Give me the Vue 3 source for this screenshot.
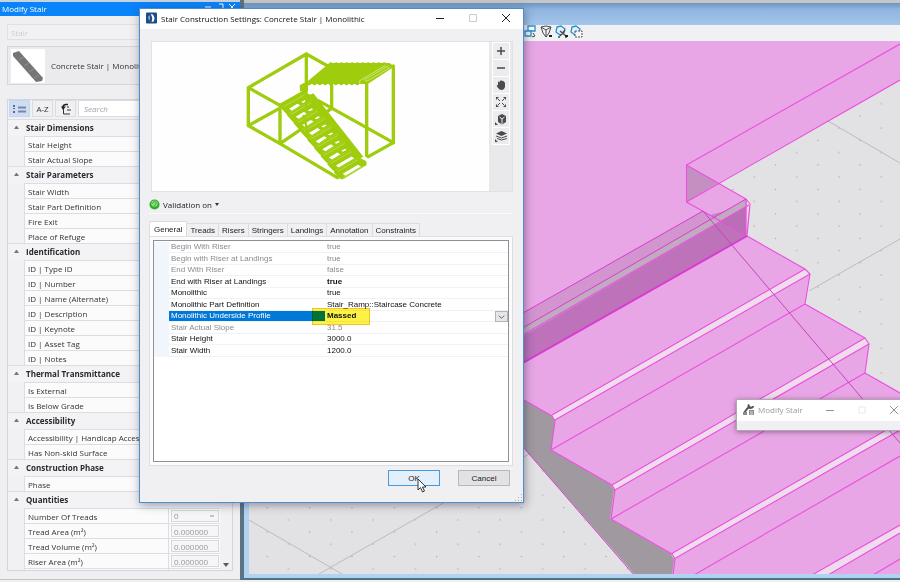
<script setup>
import { ref } from 'vue'

const groups = [
  { title: 'Stair Dimensions', rows: ['Stair Height', 'Stair Actual Slope'] },
  { title: 'Stair Parameters', rows: ['Stair Width', 'Stair Part Definition', 'Fire Exit', 'Place of Refuge'] },
  { title: 'Identification', rows: ['ID | Type ID', 'ID | Number', 'ID | Name (Alternate)', 'ID | Description', 'ID | Keynote', 'ID | Asset Tag', 'ID | Notes'] },
  { title: 'Thermal Transmittance', rows: ['Is External', 'Is Below Grade'] },
  { title: 'Accessibility', rows: ['Accessibility | Handicap Accessible', 'Has Non-skid Surface'] },
  { title: 'Construction Phase', rows: ['Phase'] },
]
const quantities = ['Tread Area (m²)', 'Tread Volume (m²)', 'Riser Area (m²)']

const tabs = ['General', 'Treads', 'Risers', 'Stringers', 'Landings', 'Annotation', 'Constraints']
const activeTab = ref('General')

const params = [
  { name: 'Begin With Riser', value: 'true', off: true },
  { name: 'Begin with Riser at Landings', value: 'true', off: true },
  { name: 'End With Riser', value: 'false', off: true },
  { name: 'End with Riser at Landings', value: 'true', bold: true },
  { name: 'Monolithic', value: 'true' },
  { name: 'Monolithic Part Definition', value: 'Stair_Ramp::Staircase Concrete' },
  { name: 'Monolithic Underside Profile', value: 'Massed', selected: true },
  { name: 'Stair Actual Slope', value: '31.5', off: true },
  { name: 'Stair Height', value: '3000.0' },
  { name: 'Stair Width', value: '1200.0' },
]

// Each tread is a rounded parallelogram; x/y is the centre of its left edge.
const treads = Array.from({ length: 9 }, (_, i) => ({
  x: 151 + i * 20,
  y: 208 + i * 24.4,
  split: i < 7,
}))

const nosings = [
  '552,415 805,269 810,274 555,420',
  '612,485 865,338 869,344 615,490',
  '671,554 900,422 900,430 674,559',
  '812,575 900,525 900,533 828,575',
]
</script>

<template>
  <div class="app">
    <aside class="panel">
      <header class="panel-title">
        <h2>Modify Stair</h2>
        <svg class="panel-ctl" viewBox="0 0 34 12" aria-hidden="true">
          <path d="M2 5h6M16 2h4v4M16 8h2M26 2l6 6M32 2l-6 6" />
        </svg>
      </header>
      <div class="panel-body">
        <input class="name-box" type="text" placeholder="Stair" aria-label="Element name" disabled />
        <button class="type-card" type="button">
          <svg viewBox="0 0 34 34" aria-hidden="true">
            <rect width="34" height="34" fill="#fff" />
            <path d="M2 4l6-2 24 27-1 3-6 1L2 7z" fill="#757575" />
            <path d="M8 11l5-3M13 17l5-3M18 23l5-3M23 29l5-3" stroke="#8e8e8e" fill="none" />
          </svg>
          <span>Concrete Stair | Monolithic</span>
        </button>
        <div class="grid-box">
          <div class="grid-bar">
            <button class="bar-btn on" type="button" aria-label="Categories">
              <svg viewBox="0 0 16 12" aria-hidden="true">
                <path d="M1 2h2v2H1zM1 8h2v2H1zM1 5h2v1H1z" fill="#5a6a88" />
                <path d="M6 4.500h8M6 8.500h8" stroke="#7688a8" stroke-width="2" fill="none" />
              </svg>
            </button>
            <button class="bar-btn" type="button">A-Z</button>
            <button class="bar-btn" type="button" aria-label="Sort">
              <svg viewBox="0 0 16 12" aria-hidden="true">
                <path d="M10 1.500H7.500Q5 2 5 4" stroke="#222" stroke-width="1.500" fill="none" />
                <path d="M3 3.500h5L5 7z" fill="#222" />
                <path d="M5.500 6v5h6.500M9 7h4M9 4h2" stroke="#333" fill="none" />
              </svg>
            </button>
            <input class="search" type="search" placeholder="Search" aria-label="Search" />
          </div>
          <div class="groups">
            <section v-for="g in groups" :key="g.title" class="group">
              <h3><i class="caret"></i>{{ g.title }}</h3>
              <div v-for="r in g.rows" :key="r" class="prop"><span>{{ r }}</span></div>
            </section>
            <section class="group">
              <h3><i class="caret"></i>Quantities</h3>
              <div class="prop">
                <label for="treadCount">Number Of Treads</label>
                <div class="field">
                  <select id="treadCount" disabled><option>0</option></select>
                </div>
              </div>
              <div v-for="(q, i) in quantities" :key="q" class="prop">
                <label :for="'q' + i">{{ q }}</label>
                <div class="field"><input :id="'q' + i" type="text" value="0.000000" disabled /></div>
              </div>
              <div class="prop"></div>
            </section>
            <i class="scroll-down"></i>
          </div>
        </div>
      </div>
    </aside>

    <main class="view">
      <div class="view-caption"></div>
      <div class="view-frame">
        <div class="view-tools">
          <svg viewBox="0 0 60 14" aria-hidden="true">
            <g fill="none" stroke="#2b8fd0" stroke-width="1.3">
              <path d="M4 1h7v5H4z" fill="#fff" /><path d="M1 6h6v5H1z" fill="#e8f4fc" />
              <path d="M33 2l4-1 4 3-1 4-4 2-4-3z" fill="#e2f1fb" />
              <path d="M48 2l4-1 4 3-1 4-4 2-4-3z" fill="#e2f1fb" />
            </g>
            <g fill="none" stroke="#4c4c4c">
              <path d="M9 8l2 3-3 1M17 2l5-1 5 1-5 3zM17 2l2 6 3 4 3-4 2-6M22 5v7" />
              <path d="M36 11l5-6M36 6l6 5M34 12h2M41 12h2" stroke-width="1.3" />
              <path d="M51 6h7v6h-7z" fill="#f6f6f6" stroke-dasharray="2 1" />
            </g>
            <path d="M25 10h3v2h-3zM41 10h3v2h-3z" fill="#222" />
          </svg>
        </div>
        <svg class="scene" viewBox="249 41 651 534" preserveAspectRatio="xMinYMin slice" role="img" aria-label="Stair model">
          <defs>
            <pattern id="dots" x="309" y="507" width="42.35" height="24.48" patternUnits="userSpaceOnUse">
              <rect x="0" y="0" width="1.2" height="1.2" fill="#a8a4a8" />
              <rect x="21.2" y="12.2" width="1.2" height="1.2" fill="#a8a4a8" />
            </pattern>
          </defs>
          <rect x="249" y="41" width="651" height="534" fill="#e2e1e3" />
          <rect x="249" y="41" width="651" height="534" fill="url(#dots)" />
          <g stroke="#c0b9bd" fill="none">
            <path d="M319 574L536 450M249 520l93 54M809 291l91-52M828 121l72 42" />
          </g>
          <path d="M500 386l24 14 28 16 3 5-4 29 61 35 3 5-4 29 61 35 3 5-2 16h-38L523 447l-23-28z" fill="#a099a0" />
          <path d="M500 41h400v39L718 183l28 16 4 5-3 32 58 33 5 5-5 30 60 34 4 6-4 29 35 20v182H672l2-16-3-5-61-35 4-29-3-5-60-35 4-29-3-5-29-16-23-14z" fill="#e9a6e6" />
          <path d="M500 326l203-115 13 7-216 124z" fill="#d395d0" />
          <path d="M500 349l246-142v29L500 376z" fill="#bd72ba" />
          <path d="M710 215l36 21v-36l-18 10z" fill="#b56cb2" opacity=".6" />
          <path d="M500 341l246-142 2 6-248 144z" fill="#c1abc0" />
          <path d="M747 200l3 4-1 5-3 25z" fill="#f3d5f0" />
          <path d="M686.5 165l31.5 18-31.5 19z" fill="#c48fc1" />
          <polygon v-for="n in nosings" :key="n" :points="n" fill="#efdded" />
          <g fill="none" stroke="#eb4fe0" stroke-width="1.1" stroke-linejoin="round">
            <path d="M900 80L686.5 202V165L900 44M686.5 165L746 199l4 5-3 32 58 33 5 5-5 30 60 34 4 6-4 29 35 20" />
            <path d="M500 386l24 14 28 16 3 5-4 29 61 35 3 5-4 29 61 35 3 5-2 16" />
            <path d="M686.5 202L747 236M746 199v37M500 348l249-143" />
            <path d="M552 415L805 269M555 420L810 274M551 450L805 304" />
            <path d="M612 485L865 338M615 490L869 344M611 519L865 373" />
            <path d="M671 554L900 422M674 559L900 430M694 575L900 456" />
            <path d="M812 575l88-50M828 575l72-42M873 575l27-16" />
          </g>
          <g fill="none" stroke="#d93bd0">
            <path d="M500 326L703 211M500 341L746 199" />
            <path d="M500 376L747 236" stroke-width="2" />
            <path d="M523 447L634 575" />
            <path d="M703 211L900 443" stroke="#c046bd" />
          </g>
        </svg>
      </div>
    </main>

    <section class="dialog" role="dialog" aria-labelledby="dlgTitle">
      <header class="dlg-title">
        <svg class="logo" viewBox="0 0 12 12" aria-hidden="true">
          <rect width="12" height="12" rx="1" fill="#1b4f86" />
          <path d="M4 3Q1 5 4 9z" fill="#a9cbe8" />
          <path d="M5 2h2q4 4 1 8H6q2-4-1-8z" fill="#fff" />
        </svg>
        <h1 id="dlgTitle">Stair Construction Settings: Concrete Stair | Monolithic</h1>
        <button type="button" aria-label="Minimize"><svg viewBox="0 0 10 10"><path d="M1 5.500h8" /></svg></button>
        <button type="button" aria-label="Maximize" disabled><svg viewBox="0 0 10 10"><path d="M1.500 1.500h7v7h-7z" /></svg></button>
        <button type="button" aria-label="Close"><svg viewBox="0 0 10 10"><path d="M1 1l8 8M9 1l-8 8" /></svg></button>
      </header>

      <div class="dlg-body">
        <div class="preview">
          <div class="preview-pic">
            <svg viewBox="30 30 456 399" role="img" aria-label="Stair preview">
              <g fill="none" stroke="#9fcc0c" stroke-width="10" stroke-linejoin="round" stroke-linecap="round">
                <path d="M275 76L214 42 40 143v114l95 54 172 102M40 143l95 53v115M214 42v110M40 257l88-49M135 196l72-40M135 311l155-106v-75M250 182l225 126" />
                <path d="M395 130v217M475 78v230l-75 42" />
              </g>
              <path d="M284 71h178l13 8-78 51H214z" fill="#9fcc0c" stroke="#9fcc0c" stroke-width="4" stroke-linejoin="round" />
              <path d="M287 71h170M222 131h150" stroke="#9fcc0c" stroke-width="9" stroke-linecap="round" stroke-dasharray="1 15" />
              <path d="M375 131l-2-8 78-47M389 119l68-40 6 5-68 40z" fill="none" stroke="#e4f3ae" stroke-width="2" />
              <path d="M194 136l14-8 12 8-5 18h-20z" fill="#9fcc0c" />
              <path d="M140 205L300 395 385 350 235 160z" fill="#9fcc0c" />
              <g v-for="t in treads" :key="t.x" :transform="`translate(${t.x} ${t.y})`">
                <path d="M-10-7L59-47 79-37 80-30 11 11 5 9z" fill="#9fcc0c" stroke="#9fcc0c" stroke-width="8" stroke-linejoin="round" />
                <path d="M-3-9L58-44" stroke="#d2e98a" stroke-width="1.500" />
                <path v-if="t.split" d="M11-2L36-17l9 5L20 4zM48-22l11-6 5 3-11 6z" fill="#fff" />
                <path v-else d="M12-2L58-29l9 5L20 4z" fill="#fff" />
                <path d="M10 13L78-26" stroke="#d2e98a" stroke-width="1.500" />
              </g>
              <path d="M214 150v70M205 225l12 45" stroke="#9fcc0c" stroke-width="7" fill="none" />
            </svg>
          </div>
          <div class="preview-tools">
            <button type="button" aria-label="Zoom in"><svg viewBox="0 0 12 12"><path d="M6 2v8M2 6h8" /></svg></button>
            <button type="button" aria-label="Zoom out"><svg viewBox="0 0 12 12"><path d="M2 6h8" /></svg></button>
            <button type="button" aria-label="Pan"><svg viewBox="0 0 12 12"><path class="fill" d="M3 6V3l1-.5.8 1V1.800L6 1.500l1 .2 1.200.3 1 .8L10 4v4q-1 3-3.500 3Q4.500 11 3 9L1.500 6.500z" /></svg></button>
            <button type="button" aria-label="Fit"><svg viewBox="0 0 12 12"><path class="thin" d="M5 5L3 3M7 5l2-2M5 7l-2 2M7 7l2 2" /><path class="fill" d="M1 1h3L1 4zM11 1v3L8 1zM1 11V8l3 3zM11 11H8l3-3z" /></svg></button>
            <button type="button" aria-label="View angle"><svg viewBox="0 0 12 12"><path class="fill" d="M7 1l4 2v6l-4 2.500L3 9V3z" /><path d="M7 11V6L4.500 4M7 6l2.500-2" class="light" /><path class="fill" d="M0 9l3 3H0z" /></svg></button>
            <button type="button" aria-label="Display mode"><svg viewBox="0 0 12 12"><path class="fill" d="M6.500 1L12 3.500 6.500 6 1 3.500zM0 9l3 3H0z" /><path class="thin" d="M1 6l5.500 2L12 6M2 8.500L6.500 10 12 8.500" /></svg></button>
          </div>
        </div>

        <button class="validation" type="button">
          <svg viewBox="0 0 12 12" aria-hidden="true">
            <circle cx="6" cy="6" r="5.500" fill="#2fae2a" />
            <circle cx="6" cy="5" r="3.500" fill="#8ddc7c" />
            <path d="M4 5q0-2 2-2t2 1.500Q8 6 6 7v1" stroke="#4b9e45" fill="none" />
          </svg>
          Validation on<i class="drop"></i>
        </button>

        <div class="tabs" role="tablist">
          <button v-for="t in tabs" :key="t" type="button" role="tab" :class="{ active: t === activeTab }" :aria-selected="t === activeTab" @click="activeTab = t">{{ t }}</button>
        </div>
        <div class="tab-page">
          <div class="list">
            <table>
              <tbody>
                <tr v-for="p in params" :key="p.name" :class="{ off: p.off, selected: p.selected, bold: p.bold }">
                  <td class="gutter"></td>
                  <th scope="row">{{ p.name }}</th>
                  <td class="val">
                    <template v-if="p.selected">
                      <select aria-label="Monolithic Underside Profile"><option>{{ p.value }}</option></select>
                      <span class="chev"><svg viewBox="0 0 12 10" aria-hidden="true"><path d="M3 4l3 3 3-3" /></svg></span>
                      <i class="marker"></i>
                    </template>
                    <template v-else>{{ p.value }}</template>
                  </td>
                </tr>
              </tbody>
            </table>
          </div>
        </div>

        <footer class="actions">
          <button type="button" class="ok">OK
            <svg class="cursor" viewBox="0 0 10 15" aria-hidden="true"><path d="M1 1v11l2.500-2.500L5.500 14l2-1-2-4H9z" /></svg>
          </button>
          <button type="button">Cancel</button>
        </footer>
        <svg class="grip" viewBox="0 0 8 8" aria-hidden="true"><path d="M6 0h1v1H6zM6 3h1v1H6zM3 3h1v1H3zM6 6h1v1H6zM3 6h1v1H3zM0 6h1v1H0z" /></svg>
      </div>
    </section>

    <section class="mini">
      <header>
        <svg class="wrench" viewBox="0 0 13 13" aria-hidden="true">
          <path d="M2 10l3-4 3-3M7 1.500Q5.500 4 8 5q3 0 3-2" fill="none" stroke="#555" stroke-width="2" />
          <path d="M1 9h4v3H1zM7 7h5v5H7z" fill="#8a8a8a" />
          <path d="M8 9h3M8 11h3" stroke="#ddd" />
        </svg>
        <h2>Modify Stair</h2>
        <button type="button" aria-label="Minimize"><svg viewBox="0 0 10 10"><path d="M1 5.500h8" /></svg></button>
        <button type="button" aria-label="Maximize" class="dim"><svg viewBox="0 0 10 10"><path d="M2 2h6v6H2z" /></svg></button>
        <button type="button" aria-label="Close"><svg viewBox="0 0 10 10"><path d="M1 1l8 8M9 1l-8 8" /></svg></button>
      </header>
    </section>
  </div>
</template>

<style>
body {
  background: #f0f0f2;
  overflow: hidden;
}
</style>

<style scoped>
* {
  box-sizing: border-box;
}
.app {
  position: relative;
  display: flex;
  height: 100vh;
  padding-bottom: 2px;
  overflow: hidden;
  font-family: "Open Sans", "Noto Sans", sans-serif;
  font-size: 8px;
  color: #333;
  background: #eef0f2;
}
button,
input,
select {
  font: inherit;
  color: inherit;
  margin: 0;
}
button {
  padding: 0;
  border: 0;
  background: none;
}
h1,
h2,
h3 {
  margin: 0;
  font-size: inherit;
  font-weight: 400;
}
svg {
  display: block;
}

.panel {
  flex: none;
  display: flex;
  flex-direction: column;
  width: 240px;
  border-top: 2px solid #c9d3dc;
  border-bottom: 1px solid #c4c4c8;
  background: #efeff1;
}
.panel-title {
  display: flex;
  justify-content: space-between;
  align-items: center;
  height: 14px;
  padding: 0 3px 2px 2px;
  background: #0a84fb;
  color: #fff;
}
.panel-ctl {
  width: 34px;
  height: 12px;
  fill: none;
  stroke: #fff;
}
.panel-body {
  flex: 1;
  min-height: 0;
  display: flex;
  flex-direction: column;
  padding: 8px 7px 8px 7px;
}
.name-box {
  flex: none;
  height: 16px;
  padding: 0 3px;
  border: 1px solid #e0e0e4;
  background: #f1f1f3;
}
.name-box::placeholder {
  color: #cdcdd1;
  opacity: 1;
}
.type-card {
  flex: none;
  display: flex;
  align-items: center;
  gap: 6px;
  height: 39px;
  margin: 6px 0 14px;
  padding: 0 3px;
  border: 1px solid #d6d6da;
  background: #ebebee;
  white-space: nowrap;
}
.type-card svg {
  width: 34px;
  height: 34px;
}
.grid-box {
  flex: 1;
  min-height: 0;
  display: flex;
  flex-direction: column;
  border: 1px solid #d4d5da;
  background: #f1f1f4;
}
.grid-bar {
  flex: none;
  display: flex;
  gap: 2px;
  height: 19px;
  padding: 0 2px 2px 1px;
}
.bar-btn {
  width: 21px;
  border: 1px solid #dcdce0;
  background: #f0f0f2;
}
.bar-btn svg {
  width: 16px;
  height: 12px;
  margin: 0 auto;
}
.bar-btn.on {
  background: #cfddf3;
  border-color: #c6d6f0;
}
.search {
  flex: 1;
  min-width: 0;
  padding: 0 5px;
  border: 1px solid #dcdce0;
  background: #fff;
  font-style: italic;
}
.search::placeholder {
  color: #a0a0a4;
}
.groups {
  position: relative;
  flex: 1;
  min-height: 0;
  overflow: hidden;
}
.group {
  border-right: 12px solid #f1f1f4;
}
.group h3 {
  display: flex;
  align-items: center;
  gap: 7px;
  height: 17px;
  padding: 0 0 2px 6px;
  border-top: 1px solid #dcdde2;
  background: #f3f3f6;
  color: #2a2a2e;
  font-weight: 700;
}
.caret {
  width: 5px;
  border: 2px solid transparent;
  border-top: 0;
  border-bottom: 3px solid #77777b;
}
.prop {
  display: grid;
  grid-template-columns: 1fr 52px;
  height: 15px;
  margin-left: 16px;
  border: 1px solid #dcdde2;
  border-width: 1px 0 0 1px;
  background: #fbfbfc;
  line-height: 16px;
  white-space: nowrap;
}
.prop > :first-child {
  padding-left: 3px;
}
.field {
  padding: 1px 1px 0 2px;
  border-left: 1px solid #dcdde2;
}
.field input,
.field select {
  display: block;
  width: 100%;
  height: 12px;
  padding: 0 2px;
  border: 1px solid #d8d8dc;
  border-radius: 0;
  background: #f6f6f8;
  color: #98989c;
  line-height: 10px;
  opacity: 1;
}
.field select {
  appearance: none;
  background: linear-gradient(#c4c4c8, #c4c4c8) right 4px center / 4px 2px no-repeat #f6f6f8;
}
.scroll-down {
  position: absolute;
  right: 3px;
  bottom: 3px;
  border: 3px solid transparent;
  border-bottom: 0;
  border-top: 4px solid #5a5a5e;
}

.view {
  flex: 1;
  min-width: 0;
  display: flex;
  flex-direction: column;
  border-left: 4px solid #5b7382;
  border-bottom: 2px solid #4b7484;
  background: #b3d2f2;
}
.view-caption {
  flex: none;
  height: 25px;
  border-top: 3px solid #c8c6c4;
  background: linear-gradient(#6c95c4, #8fb5df 30%, #a5c5ea);
}
.view-frame {
  flex: 1;
  min-height: 0;
  display: flex;
  flex-direction: column;
  padding: 0 0 4px 5px;
}
.view-tools {
  flex: none;
  height: 16px;
  padding-left: 275px;
  background: #f0f1f3;
}
.view-tools svg {
  width: 60px;
  height: 14px;
}
.scene {
  flex: 1;
  min-height: 0;
  width: 100%;
}

.dialog {
  position: absolute;
  left: 139px;
  top: 8px;
  width: 385px;
  border: 1px solid #4a8fcb;
  background: #f0eff2;
  box-shadow: 1px 2px 9px rgba(40, 40, 70, 0.45);
}
.dlg-title {
  display: flex;
  align-items: center;
  height: 20px;
  padding: 0 12px 2px 6px;
  background: #fff;
  color: #111;
}
.logo {
  width: 11px;
  height: 12px;
  margin-right: 4px;
}
.dlg-title h1 {
  flex: 1;
  white-space: nowrap;
}
.dlg-title button,
.mini button {
  width: 10px;
  height: 10px;
  margin-left: 23px;
}
.dlg-title button svg,
.mini button svg {
  width: 10px;
  height: 10px;
  fill: none;
  stroke: #222;
}
.dlg-title button:disabled svg {
  stroke: #ccc;
}
.dlg-body {
  position: relative;
  padding: 12px 10px 16px 9px;
  font-family: "Liberation Sans", Arial, sans-serif;
}
.preview {
  display: flex;
  height: 151px;
  margin-left: 2px;
  border: 1px solid #e2e2e6;
  background: #e9e9ec;
}
.preview-pic {
  flex: 1;
  display: grid;
  place-items: center;
  background: #fefefe;
}
.preview-pic svg {
  width: 152px;
  height: 133px;
}
.preview-tools {
  width: 23px;
  padding: 0 2px 0 3px;
}
.preview-tools button {
  display: grid;
  place-items: center;
  width: 18px;
  height: 18px;
  margin-bottom: -1px;
  border: 1px solid #fff;
  background: #ececef;
}
.preview-tools svg {
  width: 12px;
  height: 12px;
  fill: none;
  stroke: #4a4a4d;
  stroke-width: 1.5;
}
.preview-tools .fill {
  fill: #4a4a4d;
  stroke: none;
}
.preview-tools .thin {
  stroke-width: 1;
}
.preview-tools .light {
  stroke: #eee;
  stroke-width: 1;
}
.validation {
  display: flex;
  align-items: center;
  gap: 3px;
  width: 100%;
  height: 22px;
  padding: 4px 0 0 0;
  border-bottom: 1px solid #fafafa;
  color: #222;
  font-family: "Open Sans", "Noto Sans", sans-serif;
}
.validation svg {
  width: 11px;
  height: 11px;
}
.drop {
  border: 2px solid transparent;
  border-bottom: 0;
  border-top: 3px solid #333;
}
.tabs {
  display: flex;
  align-items: flex-end;
  height: 22px;
}
.tabs button {
  height: 13px;
  padding: 0 3px;
  border: 1px solid #dcdce0;
  border-width: 1px 1px 0 0;
  background: #f0f0f2;
  color: #222;
}
.tabs .active {
  height: 15px;
  padding: 0 4px;
  border-left-width: 1px;
  background: #fff;
}
.tab-page {
  padding: 3px;
  border: 1px solid #dedee2;
  background: #fbfbfc;
}
.list {
  height: 222px;
  padding-top: 1px;
  border: 1px solid #8d9099;
  background: #fff;
}
table {
  width: 100%;
  height: 115px;
  border-collapse: collapse;
  table-layout: fixed;
  color: #111;
}
td,
th {
  padding: 0;
  border-bottom: 1px solid #f2f2f6;
  font-weight: 400;
  line-height: 10px;
  text-align: left;
  white-space: nowrap;
}
.gutter {
  width: 15px;
  background: #f1f5fc;
  border-color: #f1f5fc;
}
th {
  width: 156px;
  padding-left: 2px;
}
.val {
  position: relative;
  padding-left: 2px;
}
.off {
  color: #8c8c90;
}
.bold .val {
  font-weight: 700;
}
.selected th {
  background: #0078d7;
  color: #fff;
}
.val select {
  display: block;
  width: 100%;
  height: 10px;
  padding: 0;
  border: 0;
  appearance: none;
  background: none;
  font-weight: 700;
  line-height: 10px;
}
.chev {
  position: absolute;
  right: 0;
  top: 0;
  width: 13px;
  height: 11px;
  border: 1px solid #b4b4b8;
  background: #e6e6e8;
}
.chev svg {
  width: 11px;
  height: 9px;
  fill: none;
  stroke: #555;
}
.marker {
  position: absolute;
  left: -13px;
  top: -3px;
  width: 58px;
  height: 17px;
  border: 1px solid #f5c320;
  background: #fff246;
  mix-blend-mode: multiply;
  pointer-events: none;
}
.actions {
  display: flex;
  justify-content: flex-end;
  gap: 18px;
  padding: 4px 3px 0 0;
}
.actions button {
  position: relative;
  width: 52px;
  height: 16px;
  border: 1px solid #b8b8bc;
  background: #e2e2e4;
  color: #222;
}
.actions .ok {
  border-color: #4a98dc;
  background: #e3f0fb;
}
.cursor {
  position: absolute;
  left: 28px;
  top: 7px;
  width: 10px;
  height: 15px;
  fill: #fff;
  stroke: #333;
}
.grip {
  position: absolute;
  right: 0;
  bottom: 0;
  width: 8px;
  height: 8px;
  fill: #b0b0b4;
}

.mini {
  position: absolute;
  left: 736px;
  top: 399px;
  width: 170px;
  padding-bottom: 9px;
  border: 1px solid #b4a4b4;
  background: #f0eff2;
  box-shadow: 0 1px 5px rgba(60, 40, 60, 0.5);
  color: #9a9a9e;
}
.mini header {
  display: flex;
  align-items: center;
  height: 21px;
  padding: 0 0 2px 5px;
  background: #fff;
}
.mini .wrench {
  width: 13px;
  height: 13px;
  margin-right: 3px;
}
.mini button {
  margin-left: 22px;
}
.mini button svg {
  stroke: #909094;
}
.mini .dim svg {
  stroke: #e8e8ea;
}
</style>
